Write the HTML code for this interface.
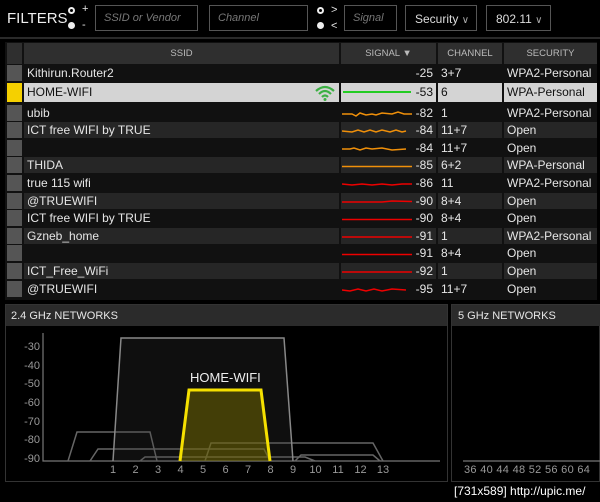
<!DOCTYPE html><html><head><style>
*{margin:0;padding:0;box-sizing:border-box}
body{width:600px;height:502px;background:#000;position:relative;overflow:hidden;font-family:"Liberation Sans",sans-serif;color:#e6e6e6;font-size:12px}
.a{position:absolute}
.box{position:absolute;border:1px solid #555;height:26px;top:5px;font-style:italic;color:#777;font-size:11px;padding:6px 8px;white-space:nowrap}
.sel{position:absolute;border:1px solid #555;height:26px;top:5px;color:#ddd;font-size:12px;padding:6px 0 0 9px;white-space:nowrap}
.rad{position:absolute;width:7px;height:7px;border-radius:50%}
.row{position:absolute;left:5px;width:592px;height:16px}
.row div{position:absolute;top:0;height:16px;line-height:16px}
.sq{left:2px;width:15px;background:#555}
.ss{left:19px;width:315px;padding-left:3px}
.sg{left:336px;width:95px;text-align:right;padding-right:3px}
.ch{left:433px;width:64px;padding-left:3px}
.se{left:499px;width:93px;padding-left:3px}
.alt .ss,.alt .sg,.alt .ch,.alt .se{background:#262626}
.hd div{background:#2f2f2f;color:#bbb;font-size:9.5px;text-align:center;height:21px;line-height:21px;top:0;position:absolute}
.yl{position:absolute;left:16px;width:24px;text-align:right;font-size:11px;color:#999}
.xl{position:absolute;top:464px;font-size:11px;color:#999;width:20px;text-align:center}
</style></head><body>
<div class="a" style="left:7px;top:10px;font-size:15px;color:#eee">FILTERS</div>
<div class="rad" style="left:68px;top:7px;border:2px solid #eee"></div><div class="a" style="left:82px;top:3px;font-size:11px">+</div>
<div class="rad" style="left:68px;top:22px;background:#eee"></div><div class="a" style="left:82px;top:19px;font-size:11px">-</div>
<div class="box" style="left:95px;width:103px">SSID or Vendor</div>
<div class="box" style="left:209px;width:99px">Channel</div>
<div class="rad" style="left:317px;top:7px;border:2px solid #eee"></div><div class="a" style="left:331px;top:4px;font-size:11px">&gt;</div>
<div class="rad" style="left:317px;top:22px;background:#eee"></div><div class="a" style="left:331px;top:20px;font-size:11px">&lt;</div>
<div class="box" style="left:344px;width:53px">Signal</div>
<div class="sel" style="left:405px;width:72px">Security <span style="font-size:10px;color:#aaa">∨</span></div>
<div class="sel" style="left:486px;width:65px">802.11 <span style="font-size:10px;color:#aaa">∨</span></div>
<div class="a" style="left:0;top:37px;width:600px;height:2px;background:#2a2a2a"></div>
<div class="a" style="left:5px;top:42px;width:592px;height:258px;background:#111"></div>
<div class="row hd" style="top:43px;height:21px"><div style="left:2px;width:15px"></div><div style="left:19px;width:315px">SSID</div><div style="left:336px;width:95px">SIGNAL ▼</div><div style="left:433px;width:64px">CHANNEL</div><div style="left:499px;width:93px">SECURITY</div></div>
<div class="row" style="top:65px"><div class="sq"></div><div class="ss">Kithirun.Router2</div><div class="sg">-25</div><div class="ch">3+7</div><div class="se">WPA2-Personal</div></div>
<div class="row" style="top:83px;height:19px;color:#111"><div class="sq" style="background:#f5d000;height:19px"></div><div class="ss" style="background:#d4d4d4;height:19px;line-height:19px">HOME-WIFI</div><div class="sg" style="background:#d4d4d4;height:19px;line-height:19px">-53</div><div class="ch" style="background:#d4d4d4;height:19px;line-height:19px">6</div><div class="se" style="background:#d4d4d4;height:19px;line-height:19px">WPA-Personal</div></div>
<svg class="a" style="left:314px;top:84px" width="22" height="17"><g fill="none" stroke="#3cb043" stroke-width="2.2"><path d="M2 7 Q11 -1 20 7"/><path d="M5 10 Q11 4 17 10"/><path d="M8 13 Q11 10 14 13"/></g><circle cx="11" cy="15.5" r="1.5" fill="#3cb043"/></svg>
<div class="a" style="left:343px;top:91px;width:68px;height:2px;background:#22cc22"></div>
<div class="row" style="top:105px"><div class="sq"></div><div class="ss">ubib</div><div class="sg">-82</div><div class="ch">1</div><div class="se">WPA2-Personal</div></div>
<div class="row alt" style="top:122px"><div class="sq"></div><div class="ss">ICT free WIFI by TRUE</div><div class="sg">-84</div><div class="ch">11+7</div><div class="se">Open</div></div>
<div class="row" style="top:140px"><div class="sq"></div><div class="ss"></div><div class="sg">-84</div><div class="ch">11+7</div><div class="se">Open</div></div>
<div class="row alt" style="top:157px"><div class="sq"></div><div class="ss">THIDA</div><div class="sg">-85</div><div class="ch">6+2</div><div class="se">WPA-Personal</div></div>
<div class="row" style="top:175px"><div class="sq"></div><div class="ss">true 115 wifi</div><div class="sg">-86</div><div class="ch">11</div><div class="se">WPA2-Personal</div></div>
<div class="row alt" style="top:193px"><div class="sq"></div><div class="ss">@TRUEWIFI</div><div class="sg">-90</div><div class="ch">8+4</div><div class="se">Open</div></div>
<div class="row" style="top:210px"><div class="sq"></div><div class="ss">ICT free WIFI by TRUE</div><div class="sg">-90</div><div class="ch">8+4</div><div class="se">Open</div></div>
<div class="row alt" style="top:228px"><div class="sq"></div><div class="ss">Gzneb_home</div><div class="sg">-91</div><div class="ch">1</div><div class="se">WPA2-Personal</div></div>
<div class="row" style="top:245px"><div class="sq"></div><div class="ss"></div><div class="sg">-91</div><div class="ch">8+4</div><div class="se">Open</div></div>
<div class="row alt" style="top:263px"><div class="sq"></div><div class="ss">ICT_Free_WiFi</div><div class="sg">-92</div><div class="ch">1</div><div class="se">Open</div></div>
<div class="row" style="top:281px"><div class="sq"></div><div class="ss">@TRUEWIFI</div><div class="sg">-95</div><div class="ch">11+7</div><div class="se">Open</div></div>
<svg class="a" style="left:342px;top:100px" width="70" height="200" fill="none" stroke-width="1.5">
<path stroke="#f0900a" d="M0 14 L10 14 L14 16 L18 13 L24 15 L30 14 L34 15 L40 13 L50 14 L56 12 L62 14 L70 14"/>
<path stroke="#f0900a" d="M0 31 L10 32 L16 30 L22 32 L28 30 L34 32 L40 30 L48 32 L54 30 L60 32 L64 31"/>
<path stroke="#f0900a" d="M0 49 L8 49 L12 48 L18 50 L24 48 L30 49 L40 48 L50 50 L64 49"/>
<path stroke="#f0900a" d="M0 66.5 L70 66.5"/>
<path stroke="#e00" d="M0 84 L10 85 L20 84 L30 85 L40 84 L50 85 L60 84 L70 84"/>
<path stroke="#e00" d="M0 102 L40 102 L50 101 L70 101.5"/>
<path stroke="#e00" d="M0 119.5 L70 119.5"/>
<path stroke="#e00" d="M0 137 L70 137"/>
<path stroke="#e00" d="M0 154.5 L70 154.5"/>
<path stroke="#e00" d="M0 172 L70 172"/>
<path stroke="#e00" d="M0 190 L8 191 L16 189 L24 191 L32 189 L40 191 L50 189 L64 190"/>
</svg>
<div class="a" style="left:5px;top:304px;width:443px;height:178px;border:1px solid #333"></div>
<div class="a" style="left:6px;top:305px;width:441px;height:21px;background:#2b2b2b;font-size:11px;padding:5px 0 0 5px">2.4 GHz NETWORKS</div>
<div class="a" style="left:451px;top:304px;width:149px;height:178px;border:1px solid #333"></div>
<div class="a" style="left:452px;top:305px;width:148px;height:21px;background:#2b2b2b;font-size:11px;padding:5px 0 0 6px">5 GHz NETWORKS</div>
<div class="yl" style="top:341px">-30</div><div class="yl" style="top:360px">-40</div><div class="yl" style="top:378px">-50</div><div class="yl" style="top:397px">-60</div><div class="yl" style="top:416px">-70</div><div class="yl" style="top:434px">-80</div><div class="yl" style="top:453px">-90</div>
<svg class="a" style="left:0;top:300px" width="600" height="202" fill="none">
<path d="M43 33 V161 H440" stroke="#777" stroke-width="1.2"/>
<path d="M68 161 L77 132 L150 132 L157 161" stroke="#666" stroke-width="1.5"/>
<path d="M90 161 L98 149 L264 149 L270 161" stroke="#666" stroke-width="1.5"/>
<path d="M205 161 L211 143 L373 143 L383 161" stroke="#666" stroke-width="1.5"/>
<path d="M295 161 L301 155 L373 155 L380 161" stroke="#666" stroke-width="1.5"/>
<path d="M140 161 L145 157 L305 157 L315 161" stroke="#666" stroke-width="1.5"/>
<path d="M113 161 L121 38 L284 38 L293 161" stroke="#888" stroke-width="1.5" fill="rgba(60,60,60,0.25)"/>
<path d="M180 161 L189 90 L261 90 L270 161" stroke="#f5e000" stroke-width="3" fill="rgba(120,110,0,0.5)"/>
<path d="M463 161 H600" stroke="#777" stroke-width="1.2"/>
</svg>
<div class="a" style="left:190px;top:370px;font-size:13px;color:#eee">HOME-WIFI</div>
<div class="xl" style="left:103px">1</div><div class="xl" style="left:125.5px">2</div><div class="xl" style="left:148px">3</div><div class="xl" style="left:170.5px">4</div><div class="xl" style="left:193px">5</div><div class="xl" style="left:215.5px">6</div><div class="xl" style="left:238px">7</div><div class="xl" style="left:260.5px">8</div><div class="xl" style="left:283px">9</div><div class="xl" style="left:305.5px">10</div><div class="xl" style="left:328px">11</div><div class="xl" style="left:350.5px">12</div><div class="xl" style="left:373px">13</div>
<div class="a" style="left:464px;top:464px;font-size:11px;color:#999;letter-spacing:0.3px;white-space:nowrap">36 40 44 48 52 56 60 64</div>
<div class="a" style="left:454px;top:484px;font-size:12px;color:#fff;white-space:nowrap">[731x589] http://upic.me/</div>
</body></html>
